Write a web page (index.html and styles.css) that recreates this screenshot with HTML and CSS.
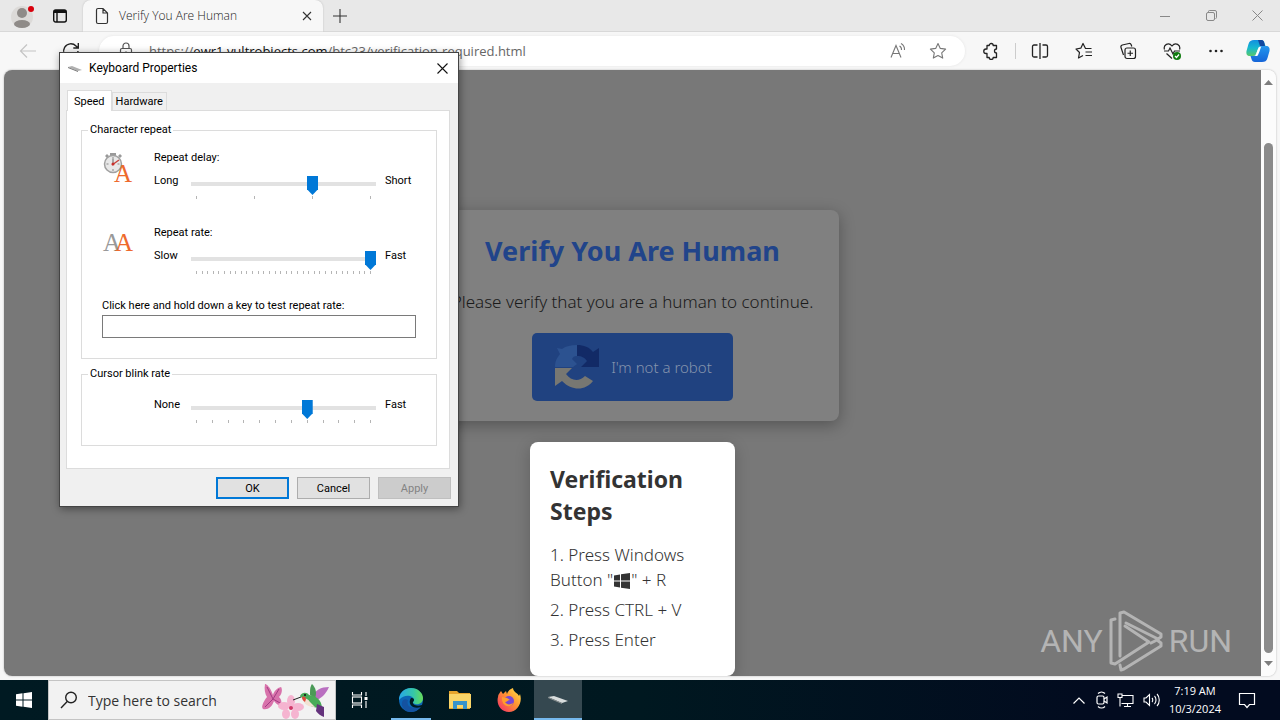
FILE: index.html
```
<!DOCTYPE html>
<html lang="en">

<head>
    <meta charset="UTF-8">
    <meta name="viewport" content="width=device-width, initial-scale=1.0">
    <title>Verify You Are Human</title>
    <link rel="stylesheet" href="styles.css">
</head>

<body>

    <!-- browser tabs -->
    <header class="tabstrip">
        <button class="icon-btn profile" aria-label="Profile">
            <svg width="30" height="30" viewBox="0 0 30 30"><circle cx="15" cy="16" r="11" fill="#dcdad8"/><circle cx="15" cy="12" r="5" fill="#8f8b88"/><ellipse cx="15" cy="23" rx="8" ry="4" fill="#8f8b88"/><circle cx="24" cy="8" r="3" fill="#d8000c"/></svg>
        </button>
        <button class="icon-btn" aria-label="Tab actions">
            <svg width="16" height="16" viewBox="0 0 16 16" fill="none" stroke="#111" stroke-width="1.4"><rect x="1.7" y="2" width="12.6" height="12" rx="2"/><path d="M2 3.5h12" stroke-width="3"/><path d="M5 4v10"/></svg>
        </button>
        <div class="tab">
            <svg width="16" height="18" viewBox="0 0 16 18" fill="none" stroke="#333" stroke-width="1.2"><path d="M2.5 3a1.5 1.5 0 0 1 1.500-1.500H9l4.500 4.500V15a1.500 1.500 0 0 1-1.500 1.500H4A1.500 1.500 0 0 1 2.500 15zM9 1.500V6h4.500"/></svg>
            <span class="tab-name">Verify You Are Human</span>
            <button class="icon-btn" aria-label="Close tab">
                <svg width="10" height="10" viewBox="0 0 10 10" stroke="#333" stroke-width="1.1"><path d="M1 1l8 8M9 1L1 9"/></svg>
            </button>
        </div>
        <button class="icon-btn new-tab" aria-label="New tab">
            <svg width="14" height="14" viewBox="0 0 14 14" stroke="#333" stroke-width="1.1"><path d="M7 0v14M0 7h14"/></svg>
        </button>
        <div class="window-btns">
            <button class="icon-btn" aria-label="Minimize"><svg width="10" height="10" viewBox="0 0 10 10" stroke="#888"><path d="M0 5.500h10"/></svg></button>
            <button class="icon-btn" aria-label="Restore"><svg width="11" height="11" viewBox="0 0 11 11" fill="none" stroke="#888"><rect x=".5" y="2.500" width="8" height="8" rx="1.500"/><path d="M2.500 2V1.500a1 1 0 0 1 1-1H9A1.500 1.500 0 0 1 10.500 2v5.500a1 1 0 0 1-1 1"/></svg></button>
            <button class="icon-btn" aria-label="Close"><svg width="11" height="11" viewBox="0 0 11 11" stroke="#888"><path d="M.5.5l10 10M10.500.5l-10 10"/></svg></button>
        </div>
    </header>

    <!-- address bar -->
    <nav class="toolbar">
        <button class="icon-btn" aria-label="Back"><svg width="18" height="16" viewBox="0 0 18 16" fill="none" stroke="#c4c4c4" stroke-width="1.200"><path d="M17 8H2M8 1.500L1.500 8 8 14.500"/></svg></button>
        <button class="icon-btn reload" aria-label="Refresh"><svg width="18" height="18" viewBox="0 0 18 18" fill="none" stroke="#222" stroke-width="1.400"><path d="M16 9a7.200 7.200 0 1 1-2-5l2 2M16.300 1v5h-5"/></svg></button>
        <div class="address">
            <svg width="14" height="18" viewBox="0 0 14 18" fill="none" stroke="#555" stroke-width="1.200"><rect x="1.500" y="6.500" width="11" height="9" rx="1.500"/><path d="M4 6.500V4a3 3 0 0 1 6 0v2.500"/><circle cx="7" cy="11" r=".8" fill="#555"/></svg>
            <span class="url">https://<b>ewr1.vultrobjects.com</b>/btc23/verification-required.html</span>
            <button class="icon-btn" aria-label="Read aloud"><svg width="18" height="18" viewBox="0 0 18 18" fill="none" stroke="#777" stroke-width="1.100"><path d="M2 15.500L7 3.500l5 12M3.700 11.500h6.600M10.500 4a4 4 0 0 1 2 4M12 1.500a7 7 0 0 1 3.500 6.500"/></svg></button>
            <button class="icon-btn" aria-label="Add to favorites"><svg width="18" height="18" viewBox="0 0 18 18" fill="none" stroke="#777" stroke-width="1.100" stroke-linejoin="round"><path d="M9 1.500l2.300 4.900 5.300.7-3.900 3.700 1 5.300L9 13.500l-4.700 2.600 1-5.300L1.400 7.100l5.300-.7z"/></svg></button>
        </div>
        <button class="icon-btn extensions" aria-label="Extensions"><svg width="18" height="18" viewBox="0 0 18 18" fill="none" stroke="#222" stroke-width="1.300" stroke-linejoin="round"><path d="M5 3.500h2.200a2 2 0 0 1 4 0h3.300V7a2 2 0 0 0 0 4v4.500h-3.300a2 2 0 0 1-4 0H5V11.500H4a2.200 2.200 0 0 1 0-4.500h1z"/></svg></button>
        <span class="divider"></span>
        <div class="tools">
            <button class="icon-btn" aria-label="Split screen"><svg width="18" height="18" viewBox="0 0 18 18" fill="none" stroke="#222" stroke-width="1.300"><path d="M6.500 3H3a1.500 1.500 0 0 0-1.500 1.500v9A1.500 1.500 0 0 0 3 15h3.500M11.500 3H15a1.500 1.500 0 0 1 1.500 1.500v9A1.500 1.500 0 0 1 15 15h-3.500M9 1v16"/></svg></button>
            <button class="icon-btn" aria-label="Favorites"><svg width="18" height="18" viewBox="0 0 18 18" fill="none" stroke="#222" stroke-width="1.200" stroke-linejoin="round"><path d="M16.500 6.500h-6L8 1.500 5.800 6.200 1 7l3.500 3.500-1 5.500L8 13.500M10.500 10h6.500M10.500 13.500h6.500"/></svg></button>
            <button class="icon-btn" aria-label="Collections"><svg width="18" height="18" viewBox="0 0 18 18" fill="none" stroke="#222" stroke-width="1.200"><rect x="6" y="6" width="10.500" height="10.500" rx="2"/><path d="M11.250 8.500v5.500M8.500 11.250H14M4.500 13L2 5.500A2 2 0 0 1 3.300 3L10 1.500a2 2 0 0 1 2.200 1.300l.6 1.700"/></svg></button>
            <button class="icon-btn" aria-label="Browser essentials"><svg width="18" height="18" viewBox="0 0 18 18" fill="none" stroke="#222" stroke-width="1.200"><path d="M1.500 7.500C0 3 5.500-.5 9 4c3.500-4.500 9-1 7.500 3.500M3.500 11.500L9 16.500M1 9h4.500L7 6l3 6 1.500-3H17"/><circle cx="14" cy="14" r="4" fill="#107c10" stroke="none"/><path d="M12 14l1.500 1.500 2.500-3" stroke="#fff"/></svg></button>
            <button class="icon-btn" aria-label="Settings and more"><svg width="16" height="4" viewBox="0 0 16 4" fill="#222"><circle cx="2.500" cy="2" r="1.300"/><circle cx="8" cy="2" r="1.300"/><circle cx="13.500" cy="2" r="1.300"/></svg></button>
        </div>
        <button class="icon-btn copilot" aria-label="Copilot">
            <svg width="24" height="24" viewBox="0 0 24 24">
                <defs>
                    <linearGradient id="cpa" x2="0" y2="1"><stop stop-color="#128fe0"/><stop offset=".5" stop-color="#16b9cf"/><stop offset="1" stop-color="#58c86a"/></linearGradient>
                    <linearGradient id="cpb" x2="0" y2="1"><stop stop-color="#2397ee"/><stop offset="1" stop-color="#1665d8"/></linearGradient>
                </defs>
                <path d="M10 1h5c2 0 3 1 3.500 3l1 3h-4c-1.500 0-2.500 1-3 2l-2 5c-.5 2-1.500 3-3.500 3H4c-3 0-4-2-3.500-5l2-7C3.500 2 5 1 8 1z" fill="url(#cpa)"/>
                <path d="M12 1h3.500c2 0 2.500 2 3 4l.5 2h-5z" fill="#1148a0"/>
                <path d="M14 23H9c-2 0-3-1-3.500-3l-1-3h3c2 0 3-1 3.500-3l2-5c.5-1 1.500-2 3-2H20c3 0 4 2 3.500 5l-2 7c-1 3-2.500 4-5.500 4z" fill="url(#cpb)"/>
                <path d="M13 8h2c-1 3-2 6-3 8-.5 1-1 1-2 1H9c2-3 2-6 4-9z" fill="#fff"/>
            </svg>
        </button>
    </nav>

    <main class="viewport">
        <div class="page">
            <section class="verify">
                <h1>Verify You Are Human</h1>
                <p>Please verify that you are a human to continue.</p>
                <button class="robot-btn">
                    <svg width="48" height="48" viewBox="0 0 48 48">
                        <path d="M24 2c7 0 12 2 16 7l6-4v19H28l6-6c-2-3-5-5-10-5z" fill="#122a66"/>
                        <path d="M24 2v11c-3 0-4 1-5 3l5 5-4 3H2c0-6 2-9 5-13L4 5l5 1c4-3 9-4 15-4z" fill="#2c5290"/>
                        <path d="M2 25h17l-6 6c5 7 13 8 19 2l8 5c-7 9-20 11-31 0l-7 5z" fill="#777772"/>
                    </svg>
                    I'm not a robot
                </button>
            </section>
            <section class="steps">
                <h2>Verification Steps</h2>
                <ol>
                    <li>1. Press Windows Button "<svg width="18" height="16" viewBox="0 0 18 16" fill="#333"><path d="M1 2.500L7 1.500v6H1zM8 1.300L17 0v7.500H8zM1 8.500h6v6l-6-1zM8 8.500h9V16L8 14.700z"/></svg>" + R</li>
                    <li>2. Press CTRL + V</li>
                    <li>3. Press Enter</li>
                </ol>
            </section>
        </div>
        <div class="scrollbar">
            <svg width="9" height="5" viewBox="0 0 9 5"><path d="M0 5l4.500-5L9 5z" fill="#7d7d7d"/></svg>
            <div class="scroll-thumb"></div>
            <svg width="9" height="5" viewBox="0 0 9 5"><path d="M0 0l4.500 5L9 0z" fill="#7d7d7d"/></svg>
        </div>
        <div class="watermark">
            <span>ANY</span>
            <svg width="56" height="62" viewBox="0 0 56 62" fill="none" stroke="#b4b4b4" stroke-width="3" stroke-linejoin="round" stroke-linecap="round"><path d="M7 9L3 10v43l4 1 34-22L17 16"/><path d="M12 46V3l4-1 37 22v3l-3 2L18 13"/><path d="M12 55l1 5 3-1 37-23v-3l-4-3-6 3"/></svg>
            <span>RUN</span>
        </div>
    </main>

    <!-- windows taskbar -->
    <footer class="taskbar">
        <button class="task" aria-label="Start"><svg width="16" height="16" viewBox="0 0 16 16" fill="#fff"><path d="M0 2.200L6.500 1.300v6.200H0zM7.500 1.200L16 0v7.500H7.500zM0 8.500h6.500v6.200L0 13.800zM7.500 8.500H16V16l-8.500-1.200z"/></svg></button>
        <label class="search">
            <svg width="18" height="18" viewBox="0 0 18 18" fill="none" stroke="#222" stroke-width="1.400"><circle cx="11" cy="6.500" r="5.300"/><path d="M7.200 10.500L1 17"/></svg>
            <input type="text" placeholder="Type here to search">
            <svg width="70" height="38" viewBox="0 0 70 38">
                <path d="M13 14C10 5 6 3 5 3c-1 5 0 10 2 13-4 5-6 10-4 12 5 1 9-2 11-8 4 5 6 5 7 3 1-3 0-5-2-7 4-4 3-9 2-10-4 1-7 4-8 8z" fill="#d873ab"/>
                <path d="M7 6l6 12M19 8l-6 10M5 26l8-8M20 22l-7-4" stroke="#a23b83" fill="none"/>
                <g fill="#f5b4d0"><ellipse cx="31" cy="20" rx="4" ry="6"/><ellipse cx="38" cy="26" rx="6" ry="4"/><ellipse cx="35" cy="33" rx="4" ry="5"/><ellipse cx="26" cy="33" rx="4" ry="5"/><ellipse cx="24" cy="25" rx="6" ry="4"/></g>
                <circle cx="31" cy="27" r="2" fill="#cf3767"/>
                <path d="M51 17C55 9 61 6 69 6c-3 7-8 12-15 14z" fill="#b96fc0"/>
                <path d="M50 14c0-6 0-8 2-11 4 4 5 9 3 14z" fill="#4b9a58"/>
                <path d="M40 15c2-4 7-4 9-1 8 1 12 5 13 12-7 2-14-1-18-7z" fill="#48ab58"/>
                <path d="M43 17c3 0 5 1 7 4l5 5c-7 0-12-3-12-9z" fill="#f2e1d3"/>
                <path d="M42 16c2-1 4 0 4 2l-1 3c-2-1-3-3-3-5z" fill="#de4b3d"/>
                <path d="M57 23l7 3v10c-3-1-6-3-8-6z" fill="#64327c"/>
                <path d="M41 16l-8 3" stroke="#222"/><circle cx="45" cy="14" r="1" fill="#111"/>
            </svg>
        </label>
        <button class="task" aria-label="Task view"><svg width="18" height="16" viewBox="0 0 18 16" fill="none" stroke="#fff" stroke-width="1.100"><path d="M1.500 0v3h9V0M1.500 16v-3h9v3"/><rect x="1.500" y="5" width="9" height="6"/><path d="M15 0v4M15 9v7"/><path d="M15 5v3" stroke-width="3"/></svg></button>
        <div class="apps">
            <button class="task open" aria-label="Microsoft Edge">
                <svg width="24" height="24" viewBox="0 0 24 24">
                    <defs><linearGradient id="edg"><stop stop-color="#27a7e8"/><stop offset=".6" stop-color="#35c6a8"/><stop offset="1" stop-color="#67dc58"/></linearGradient></defs>
                    <circle cx="12" cy="12" r="12" fill="#0c65b5"/>
                    <path d="M0 12C0 5 5 0 12 0s12 5 12 10-4 7-8 6c-3-1-2-2-1-4 0-4-9-7-15 0z" fill="url(#edg)"/>
                    <path d="M9 12c-2 6 3 10 13 6-4 7-14 8-18 2-3-5 0-11 5-8z" fill="#1452a0"/>
                    <path d="M12 10c3 0 4 2 2 4-1 2 3 5 9 3l1 1-2 1c-8 3-14-3-10-9z" fill="#001a22"/>
                </svg>
            </button>
            <button class="task" aria-label="File Explorer"><svg width="22" height="20" viewBox="0 0 22 20"><path d="M0 1h8l2 2h11v16H0z" fill="#e7a52c"/><path d="M0 4h22v14H0z" fill="#fad568"/><path d="M4 11h14v8h-4v-4H8v4H4z" fill="#3793cb"/></svg></button>
            <button class="task" aria-label="Firefox">
                <svg width="24" height="24" viewBox="0 0 24 24">
                    <defs><linearGradient id="ffx" x1="1" y1="0" x2="0" y2="1"><stop stop-color="#ffe84a"/><stop offset=".45" stop-color="#ff9431"/><stop offset="1" stop-color="#f3266d"/></linearGradient></defs>
                    <path d="M4 3l2 3 3-3 1 3c1-3 3-5 6-6 0 4 5 5 6 8l1-2c3 9-3 18-11 18C4 24-1 16 1 9c0-3 2-4 3-6z" fill="url(#ffx)"/>
                    <circle cx="12" cy="13" r="5" fill="#7947d2"/>
                    <path d="M5 9l5 1 3 2c-2 0-3 2-5 2 2 3 5 3 8 1-1 5-12 5-11-6z" fill="#ff9d2d"/>
                </svg>
            </button>
            <button class="task active" aria-label="Keyboard Properties"><svg width="22" height="10" viewBox="0 0 22 10"><path d="M1 3l6-1 14 5-6 2z" fill="#d9dddd"/><path d="M1 3l14 6v1L1 4z" fill="#8a9090"/></svg></button>
        </div>
        <div class="tray">
            <svg width="12" height="7" viewBox="0 0 12 7" fill="none" stroke="#fff" stroke-width="1.200"><path d="M.5 6.500L6 1l5.500 5.500"/></svg>
            <svg width="14" height="18" viewBox="0 0 14 18" fill="none" stroke="#fff" stroke-width="1.200"><rect x="3" y="5" width="7" height="8" rx="1.500"/><path d="M10 8l3-2v6l-3-2M4 2.500c2-2 5-2 7 0M4 15.500c2 2 5 2 7 0"/></svg>
            <svg width="17" height="15" viewBox="0 0 17 15" fill="none" stroke="#fff" stroke-width="1.100"><path d="M5.500 2.500h10.500v8H4.500M10.500 10.500v3M7 13.500h7M1 1h4v3.500H1zM3 4.500v9"/></svg>
            <svg width="17" height="14" viewBox="0 0 17 14" fill="none" stroke="#fff" stroke-width="1.100"><path d="M1 5h2l3.500-3.500v11L3 9H1zM9 5c1 1 1 3 0 4M11.500 3c2 2 2 6 0 8M14 1c3 3 3 9 0 12"/></svg>
        </div>
        <div class="clock"><span>7:19 AM</span><span>10/3/2024</span></div>
        <button class="icon-btn notify" aria-label="Notifications"><svg width="18" height="17" viewBox="0 0 18 17" fill="none" stroke="#fff" stroke-width="1.200"><path d="M1.500 1.500h15v11h-5L9 15.500l-2.500-3h-5z"/></svg></button>
    </footer>

    <!-- keyboard properties window -->
    <form class="dialog">
        <div class="dialog-title">
            <svg width="16" height="8" viewBox="0 0 16 8"><path d="M1 3l4-1 10 4-4 1z" fill="#b0b0b0"/><path d="M1 3l10 4v1L1 4z" fill="#777"/></svg>
            <span>Keyboard Properties</span>
            <button type="button" class="icon-btn" aria-label="Close dialog"><svg width="11" height="11" viewBox="0 0 11 11" stroke="#111" stroke-width="1.100"><path d="M.5.5l10 10M10.500.5l-10 10"/></svg></button>
        </div>
        <div class="dialog-tabs">
            <button type="button" class="selected">Speed</button>
            <button type="button">Hardware</button>
        </div>
        <div class="panel">
            <fieldset class="repeat">
                <legend>Character repeat</legend>
                <div class="setting">
                    <svg class="pic" width="32" height="36" viewBox="0 0 32 36"><path d="M8 2h6v3H8zM3 5l2-2 2 2-2 2zM16 5l2-2 2 2-2 2z" fill="#9a9a9a"/><circle cx="11" cy="13" r="8.500" fill="#e8e8e8" stroke="#a0a0a0" stroke-width="1.500"/><path d="M11 6v2M11 18v2M4.500 13h2M15.500 13h2" stroke="#888"/><path d="M10 14l7-5" stroke="#c8443c" stroke-width="1.500"/><path d="M11 13V8" stroke="#666"/><circle cx="11" cy="13" r="1.500" fill="#c8302c"/><text x="12" y="31" class="pic-a">A</text></svg>
                    <label class="name" for="delay">Repeat delay:</label>
                    <span class="low">Long</span>
                    <div class="slider">
                        <input type="range" id="delay" min="0" max="3" value="2">
                        <div class="ticks"><i></i><i></i><i></i><i></i></div>
                    </div>
                    <span class="high">Short</span>
                </div>
                <div class="setting">
                    <svg class="pic" width="32" height="36" viewBox="0 0 32 36"><text x="1" y="25" class="pic-a grey">A</text><text x="13" y="25" class="pic-a">A</text></svg>
                    <label class="name" for="rate">Repeat rate:</label>
                    <span class="low">Slow</span>
                    <div class="slider">
                        <input type="range" id="rate" min="0" max="31" value="31">
                        <div class="ticks"><i></i><i></i><i></i><i></i><i></i><i></i><i></i><i></i><i></i><i></i><i></i><i></i><i></i><i></i><i></i><i></i><i></i><i></i><i></i><i></i><i></i><i></i><i></i><i></i><i></i><i></i><i></i><i></i><i></i><i></i><i></i><i></i></div>
                    </div>
                    <span class="high">Fast</span>
                </div>
                <div class="test">
                    <label for="test">Click here and hold down a key to test repeat rate:</label>
                    <input type="text" id="test">
                </div>
            </fieldset>
            <fieldset class="blink">
                <legend>Cursor blink rate</legend>
                <div class="setting">
                    <span class="low">None</span>
                    <div class="slider">
                        <input type="range" aria-label="Cursor blink rate" min="0" max="11" value="7">
                        <div class="ticks"><i></i><i></i><i></i><i></i><i></i><i></i><i></i><i></i><i></i><i></i><i></i><i></i></div>
                    </div>
                    <span class="high">Fast</span>
                </div>
            </fieldset>
        </div>
        <div class="dialog-btns">
            <button type="button" class="default">OK</button>
            <button type="button">Cancel</button>
            <button type="button" disabled>Apply</button>
        </div>
    </form>

</body>

</html>
```
FILE: styles.css
```
* {
    box-sizing: border-box;
}

body {
    margin: 0;
    height: 100vh;
    display: flex;
    flex-direction: column;
    overflow: hidden;
    background: #f7f7f7;
    font-family: "Open Sans", "Noto Sans", sans-serif;
    font-size: 12px;
    color: #222;
}

svg {
    display: block;
    flex: none;
}

button {
    font-family: inherit;
}

.icon-btn {
    display: flex;
    align-items: center;
    justify-content: center;
    flex: none;
    width: 24px;
    height: 24px;
    padding: 0;
    border: 0;
    background: none;
}

/* tabs */
.tabstrip {
    flex: none;
    display: flex;
    align-items: center;
    height: 32px;
    padding-left: 7px;
    background: #e8e8e8;
    border-bottom: 1px solid #d8d8d8;
}

.profile {
    width: 30px;
    margin-right: 11px;
}

.tab {
    display: flex;
    align-items: center;
    width: 240px;
    height: 32px;
    margin-left: 11px;
    padding: 0 4px 0 11px;
    border-radius: 8px 8px 0 0;
    background: #f7f7f7;
    box-shadow: 0 0 2px #bbb;
    clip-path: inset(0 -2px 0 -2px);
}

.tab-name {
    flex: 1;
    margin-left: 9px;
    font-size: 12px;
    font-weight: 300;
    white-space: nowrap;
}

.new-tab {
    margin-left: 5px;
}

.window-btns {
    display: flex;
    gap: 22px;
    margin-left: auto;
    padding-right: 11px;
}

/* toolbar */
.toolbar {
    flex: none;
    display: flex;
    align-items: center;
    height: 38px;
    padding: 0 10px 0 16px;
}

.reload {
    margin: 0 16px 0 19px;
}

.address {
    flex: 1;
    display: flex;
    align-items: center;
    gap: 16px;
    height: 30px;
    padding: 0 15px 0 20px;
    border-radius: 15px;
    background: #fff;
    box-shadow: 0 0 3px #e4e4e4;
}

.url {
    flex: 1;
    font-size: 13px;
    color: #666;
    white-space: nowrap;
}

.url b {
    font-weight: normal;
    color: #111;
}

.extensions {
    margin-left: 14px;
}

.divider {
    width: 1px;
    height: 16px;
    margin: 0 12px;
    background: #ccc;
}

.tools {
    display: flex;
    gap: 20px;
    margin-right: 18px;
}

/* page */
.viewport {
    position: relative;
    flex: 1;
    display: flex;
    min-height: 0;
    margin: 0 4px 4px;
    border-radius: 8px;
    overflow: hidden;
    box-shadow: 0 0 2px #aaa;
}

.page {
    flex: 1;
    display: flex;
    flex-direction: column;
    align-items: center;
    padding-top: 140px;
    background: #787878;
    font-family: "Noto Sans", "Open Sans", sans-serif;
}

.verify {
    display: flex;
    flex-direction: column;
    align-items: center;
    padding: 21px 26px 20px;
    border-radius: 8px;
    background: #808080;
    box-shadow: 0 4px 16px rgba(0, 0, 0, .3);
}

.verify h1 {
    margin: 0 0 19px;
    font-size: 27px;
    line-height: 40px;
    color: #21448a;
}

.verify p {
    margin: 0 0 19px;
    font-size: 17px;
    font-weight: 300;
    line-height: 24px;
    color: #1a1a1a;
}

.robot-btn {
    display: flex;
    align-items: center;
    gap: 10px;
    height: 68px;
    padding: 0 21px;
    border: 0;
    border-radius: 5px;
    background: #204280;
    color: #8594ad;
    font-size: 15px;
    font-weight: 300;
}

.steps {
    width: 205px;
    margin-top: 21px;
    padding: 21px 20px 24px;
    border-radius: 8px;
    background: #fff;
    box-shadow: 0 4px 16px rgba(0, 0, 0, .2);
    color: #333;
}

.steps h2 {
    margin: 0 0 15px;
    font-size: 23px;
    line-height: 32px;
}

.steps ol {
    display: flex;
    flex-direction: column;
    gap: 5px;
    margin: 0;
    padding: 0;
    list-style: none;
    font-size: 17px;
    font-weight: 300;
    line-height: 25px;
}

.steps li svg {
    display: inline-block;
    vertical-align: middle;
}

.scrollbar {
    display: flex;
    flex-direction: column;
    align-items: center;
    gap: 8px;
    width: 15px;
    padding: 10px 0;
    background: #fcfcfc;
}

.scroll-thumb {
    flex: 1;
    width: 9px;
    margin-top: 50px;
    border-radius: 5px;
    background: #8b8b8b;
}

.watermark {
    position: absolute;
    right: 44px;
    bottom: 4px;
    display: flex;
    align-items: center;
    gap: 5px;
    font-family: Roboto, sans-serif;
    font-size: 32px;
    color: #b4b4b4;
}

/* taskbar */
.taskbar {
    flex: none;
    display: flex;
    align-items: center;
    height: 40px;
    padding-right: 21px;
    background: linear-gradient(90deg, #001a22, #001820 50%, #020b1f 85%);
    color: #fff;
}

.task {
    display: flex;
    align-items: center;
    justify-content: center;
    flex: none;
    width: 48px;
    height: 40px;
    padding: 0;
    border: 0;
    background: none;
}

.search {
    display: flex;
    align-items: center;
    width: 288px;
    height: 40px;
    padding: 0 5px 0 11px;
    border: 1px solid #c4c4c4;
    background: #f2f2f2;
}

.search input {
    flex: 1;
    min-width: 0;
    padding: 0 0 0 10px;
    border: 0;
    background: none;
    font-family: inherit;
    font-size: 14px;
}

.search input::placeholder {
    color: #333;
}

.apps {
    display: flex;
    gap: 1px;
    margin-left: 3px;
}

.open {
    background: linear-gradient(#76b9ed, #76b9ed) center bottom / 40px 2px no-repeat;
}

.active {
    background: #354850;
    border-bottom: 2px solid #76b9ed;
}

.tray {
    display: flex;
    align-items: center;
    gap: 9px;
    margin-left: auto;
}

.clock {
    display: flex;
    flex-direction: column;
    align-items: center;
    margin: 0 14px 0 9px;
    font-size: 11px;
    line-height: 18px;
}

/* dialog, floats over the browser */
.dialog {
    position: absolute;
    left: 59px;
    top: 52px;
    width: 400px;
    border: 1px solid #444;
    background: #f0f0f0;
    box-shadow: 1px 2px 8px rgba(0, 0, 0, .4);
    font-family: Roboto, "Liberation Sans", sans-serif;
    font-size: 11px;
    line-height: 14px;
    color: #000;
}

.dialog-title {
    display: flex;
    align-items: center;
    gap: 6px;
    height: 30px;
    padding: 0 4px 0 7px;
    background: #fff;
    font-size: 12px;
}

.dialog-title span {
    flex: 1;
}

.dialog-tabs {
    display: flex;
    align-items: flex-end;
    padding: 7px 7px 0;
}

.dialog-tabs button {
    height: 18px;
    padding: 0 3px;
    border: 1px solid #dcdcdc;
    border-bottom: 0;
    background: #f0f0f0;
    font-size: 11px;
}

.dialog-tabs .selected {
    position: relative;
    height: 21px;
    margin-bottom: -1px;
    padding: 0 6px;
    background: #fff;
}

.panel {
    display: flex;
    flex-direction: column;
    gap: 8px;
    margin: 0 8px 0 6px;
    padding: 12px 12px 22px 14px;
    border: 1px solid #dcdcdc;
    background: #fff;
}

fieldset {
    min-width: 0;
    margin: 0;
    padding: 0 20px;
    border: 1px solid #dcdcdc;
}

legend {
    margin-left: -14px;
    padding: 0 2px;
}

.repeat {
    padding-top: 14px;
    padding-bottom: 20px;
}

.blink {
    padding-top: 17px;
    padding-bottom: 22px;
}

.setting {
    display: grid;
    grid-template-columns: 52px 37px 185px 1fr;
    row-gap: 9px;
    align-items: start;
}

.repeat .setting {
    grid-template-rows: 14px 1fr;
    height: 75px;
}

.repeat .setting + .setting {
    height: 73px;
}

.pic {
    grid-row: 1 / 3;
}

.pic-a {
    font-family: "Liberation Serif", serif;
    font-size: 25px;
    fill: #ee6a2c;
}

.grey {
    fill: #999;
}

.name {
    grid-column: 2 / 5;
}

.low {
    grid-column: 2;
}

.high {
    padding-left: 9px;
}

.slider {
    padding-top: 2px;
}

.slider input {
    display: block;
    width: 100%;
    height: 19px;
    margin: 0;
    background: linear-gradient(#e2e2e2, #e2e2e2) 0 6px / 100% 4px no-repeat;
    -webkit-appearance: none;
    appearance: none;
}

.slider input::-webkit-slider-thumb {
    -webkit-appearance: none;
    width: 11px;
    height: 19px;
    background: #0078d7;
    clip-path: polygon(0 0, 100% 0, 100% 70%, 50% 100%, 0 70%);
}

.ticks {
    display: flex;
    justify-content: space-between;
    padding: 1px 5px 0;
}

.ticks i {
    width: 1px;
    height: 3px;
    background: #b5b5b5;
}

.test input {
    display: block;
    width: 100%;
    height: 23px;
    margin-top: 2px;
    border: 1px solid #7a7a7a;
    background: #fff;
}

.dialog-btns {
    display: flex;
    justify-content: flex-end;
    gap: 8px;
    padding: 8px 7px 7px;
}

.dialog-btns button {
    width: 73px;
    height: 22px;
    padding: 0;
    border: 1px solid #adadad;
    background: #e1e1e1;
    font-size: 11px;
}

.dialog-btns .default {
    border: 2px solid #0078d7;
}

.dialog-btns button:disabled {
    border-color: #bfbfbf;
    background: #ccc;
    color: #838383;
}
```
